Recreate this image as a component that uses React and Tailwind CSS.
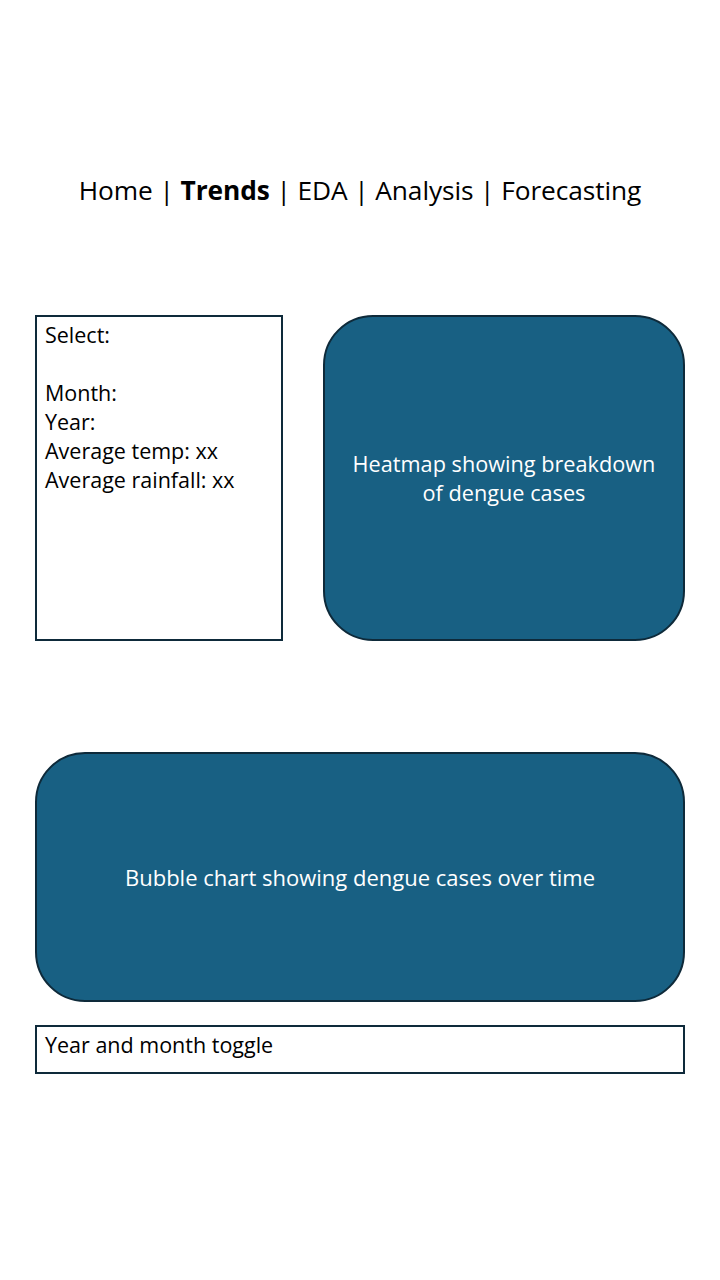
export default function App() {
  const font = { fontFamily: '"Open Sans", "Noto Sans", sans-serif' };
  return (
    <div className="w-[720px] h-[1280px] bg-white text-black" style={font}>
      <div className="pt-[170px] text-center text-[26.3px] leading-[40px] tracking-[-0.1px]">
        Home | <span className="font-bold">Trends</span> | EDA | Analysis | Forecasting
      </div>
      <div className="flex px-[35px] mt-[105px]">
        <div className="w-[248px] h-[326px] border-2 border-[#0e2a3a] pl-[8px] pt-[3px] text-[21.5px] leading-[29px]">
          <div>Select:</div>
          <div>&nbsp;</div>
          <div>Month:</div>
          <div>Year:</div>
          <div>Average temp: xx</div>
          <div>Average rainfall: xx</div>
        </div>
        <div className="ml-auto w-[362px] h-[326px] rounded-[50px] border-2 border-[#0e2a3a] bg-[#186083] flex items-center justify-center text-center text-white text-[21.7px] leading-[29px] px-2">
          <div>Heatmap showing breakdown<br />of dengue cases</div>
        </div>
      </div>
      <div className="mx-[35px] mt-[111px] h-[250px] rounded-[50px] border-2 border-[#0e2a3a] bg-[#186083] flex items-center justify-center text-white text-[22px] leading-[29px]">
        Bubble chart showing dengue cases over time
      </div>
      <div className="mx-[35px] mt-[23px] h-[49px] border-2 border-[#0e2a3a] pl-[8px] pt-[3px] text-[21.5px] leading-[29px]">
        Year and month toggle
      </div>
    </div>
  );
}
